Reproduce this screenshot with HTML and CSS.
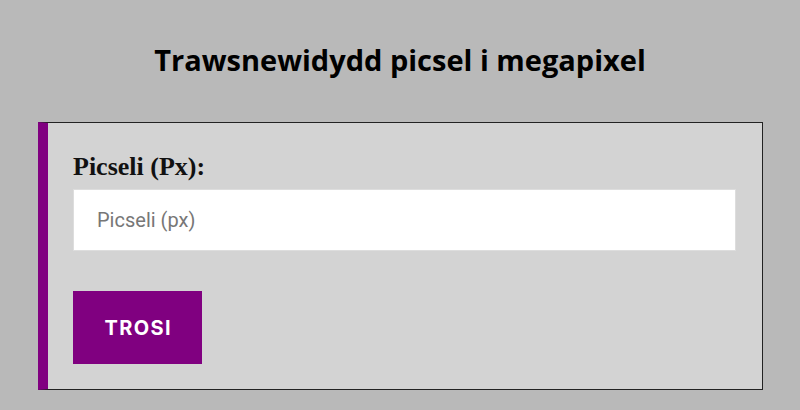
FILE: index.html
```html
<!DOCTYPE html>
<html>
<head>
<meta charset="utf-8">
<link rel="stylesheet" href="styles.css">
</head>
<body>
<h1 class="title">Trawsnewidydd picsel i megapixel</h1>
<div class="card">
  <label class="label" for="px">Picseli (Px):</label>
  <input class="field" id="px" type="text" placeholder="Picseli (px)">
  <button class="btn">TROSI</button>
</div>
</body>
</html>
```
FILE: styles.css
```css
html, body {
  margin: 0;
  padding: 0;
  background: #b9b9b9;
}
body {
  padding-top: 38px;
}
.title {
  margin: 0 0 40px;
  text-align: center;
  font-family: "Open Sans", sans-serif;
  font-weight: 700;
  font-size: 29px;
  line-height: 44px;
  color: #000;
}
.card {
  box-sizing: border-box;
  width: 725px;
  margin: 0 0 0 38px;
  background: #d3d3d3;
  border: 1px solid #222;
  border-left: 10px solid #800080;
  padding: 31px 26px 25px 25px;
  display: flex;
  flex-direction: column;
  align-items: flex-start;
}
.label {
  font-family: "Liberation Serif", serif;
  font-weight: 700;
  font-size: 26px;
  line-height: 26px;
  color: #111;
  margin-bottom: 9px;
}
.field {
  box-sizing: border-box;
  width: 100%;
  height: 62px;
  border: 1px solid #ddd;
  background: #fff;
  padding: 0 23px;
  font-family: Roboto, sans-serif;
  font-size: 20px;
  color: #333;
  outline: none;
  margin: 0 0 40px;
}
.field::placeholder {
  color: #777;
}
.btn {
  width: 129px;
  height: 73px;
  border: none;
  background: #800080;
  color: #fff;
  font-family: Inter, sans-serif;
  font-weight: 700;
  font-size: 20px;
  letter-spacing: 1.4px;
  padding: 0 0 0 1.4px;
}
```
